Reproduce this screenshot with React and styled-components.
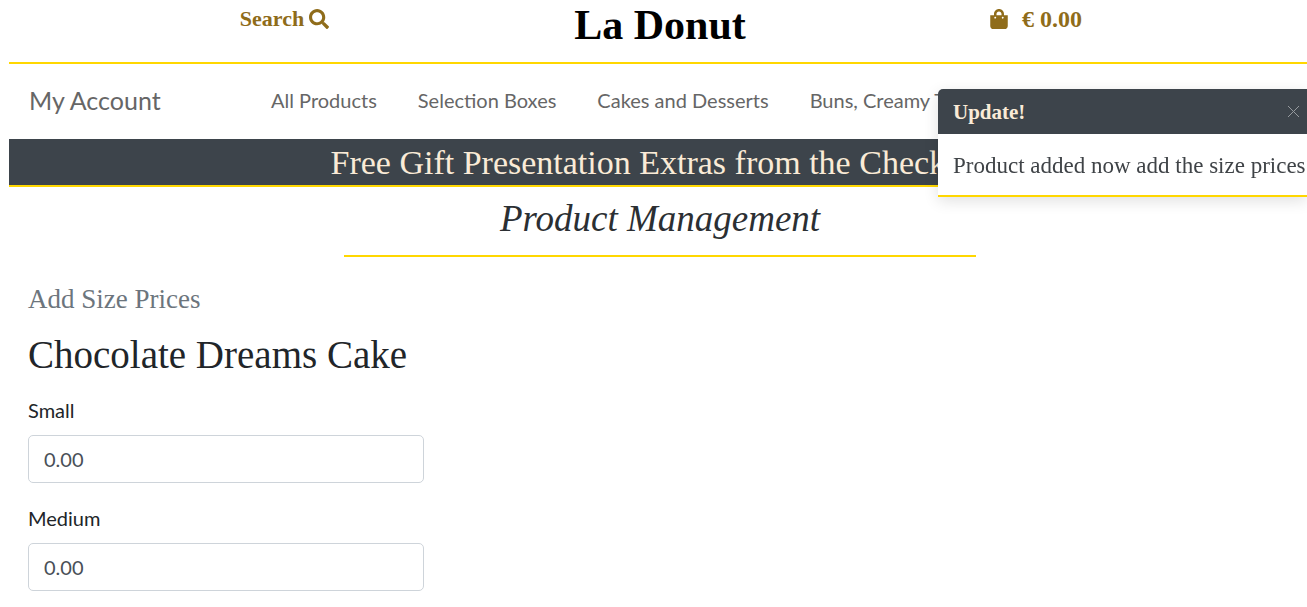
import React, { useState } from "react";
import styled, { createGlobalStyle } from "styled-components";
import { FaSearch, FaShoppingBag } from "react-icons/fa";

const serif = '"Liberation Serif", serif';
const gold = "#ffd700";
const slate = "#3d444b";
const cream = "#faebd7";

const GlobalStyle = createGlobalStyle`
  *, *::before, *::after { box-sizing: border-box; }
  body {
    margin: 0 -4px 0 9px;
    overflow-x: hidden;
    background: #fff;
    color: #212529;
    font-family: Lato, sans-serif;
    font-size: 20px;
    line-height: 30px;
  }
`;

const Header = styled.header`
  display: grid;
  grid-template-columns: 1fr 200px 1fr;
  justify-items: center;
  height: 64px;
  border-bottom: 2px solid ${gold};
`;

const HeaderLink = styled.a`
  display: inline-flex;
  align-items: center;
  align-self: start;
  gap: ${({ $gap }) => $gap}px;
  height: 38px;
  color: #8f6c1a;
  font: bold ${({ $size }) => $size}px/38px ${serif};
  text-decoration: none;
`;

const Brand = styled.a`
  color: #000;
  font: bold 42px/50px ${serif};
  text-decoration: none;
  white-space: nowrap;
`;

const Nav = styled.nav`
  display: flex;
  align-items: center;
  height: 75px;
  padding: 0 0 4px 20px;
  white-space: nowrap;
  overflow: hidden;
`;

const AccountLink = styled.a`
  flex: 0 0 242px;
  color: #666;
  font-size: 25px;
  text-decoration: none;
`;

const NavList = styled.ul`
  display: flex;
  gap: 41px;
  margin: 0;
  padding: 0;
  list-style: none;
`;

const NavLink = styled.a`
  color: #666;
  text-decoration: none;
`;

const Banner = styled.p`
  margin: 0;
  height: 48px;
  padding-top: 2px;
  border-bottom: 2px solid ${gold};
  background: ${slate};
  color: ${cream};
  font: 34px/44px ${serif};
  text-align: center;
  white-space: nowrap;
`;

const Main = styled.main`
  padding: 0 19px;
`;

const PageTitle = styled.h1`
  width: 50%;
  margin: 0 auto 26px;
  padding-bottom: 4px;
  border-bottom: 2px solid ${gold};
  color: #2b2f33;
  font: italic 37px/64px ${serif};
  text-align: center;
  white-space: nowrap;
`;

const Subtitle = styled.h2`
  margin: 0 0 16px;
  color: #6c757d;
  font: 27px/32px ${serif};
`;

const ProductName = styled.h3`
  margin: 0 0 16px;
  font: 39px/48px ${serif};
`;

const Form = styled.form`
  max-width: 396px;
`;

const Field = styled.div`
  display: flex;
  flex-direction: column;
  gap: 10px;
  margin-bottom: 20px;
`;

const Label = styled.label`
  color: #212529;
`;

const Input = styled.input`
  width: 100%;
  height: 48px;
  padding: 8px 15px;
  border: 1px solid #ced4da;
  border-radius: 5px;
  background: #fff;
  color: #495057;
  font: inherit;
`;

const Toast = styled.section`
  position: fixed;
  top: 89px;
  right: 0;
  width: 369px;
  overflow: hidden;
  border-bottom: 2px solid ${gold};
  border-top-left-radius: 5px;
  background: #fff;
  box-shadow: 0 4px 15px rgba(0, 0, 0, 0.12);
  font-family: ${serif};
`;

const ToastHeader = styled.div`
  display: flex;
  align-items: center;
  justify-content: space-between;
  height: 45px;
  padding: 0 7px 0 15px;
  background: ${slate};
  color: ${cream};
  font-size: 21px;
`;

const CloseButton = styled.button`
  display: flex;
  padding: 0;
  border: 0;
  background: none;
  color: #969a9e;
  cursor: pointer;
`;

const ToastBody = styled.p`
  margin: 0;
  padding: 2px 0 0 15px;
  color: #3f4347;
  font-size: 23px;
  line-height: 59px;
  white-space: nowrap;
`;

const links = ["All Products", "Selection Boxes", "Cakes and Desserts", "Buns, Creamy Treats"];
const sizes = ["Small", "Medium"];

export default function App() {
  const [open, setOpen] = useState(true);
  return (
    <>
      <GlobalStyle />
      <Header>
        <HeaderLink href="#search" $gap={5} $size={22}>
          Search <FaSearch size={20} aria-hidden="true" />
        </HeaderLink>
        <Brand href="#home">La Donut</Brand>
        <HeaderLink href="#bag" $gap={13} $size={24}>
          <FaShoppingBag size={20} aria-hidden="true" /> € 0.00
        </HeaderLink>
      </Header>
      <Nav aria-label="Main">
        <AccountLink href="#account">My Account</AccountLink>
        <NavList>
          {links.map((name) => (
            <li key={name}>
              <NavLink href="#products">{name}</NavLink>
            </li>
          ))}
        </NavList>
      </Nav>
      <Banner>Free Gift Presentation Extras from the Checkout</Banner>
      <Main>
        <PageTitle>Product Management</PageTitle>
        <Subtitle>Add Size Prices</Subtitle>
        <ProductName>Chocolate Dreams Cake</ProductName>
        <Form>
          {sizes.map((size) => (
            <Field key={size}>
              <Label htmlFor={size}>{size}</Label>
              <Input id={size} name={size} inputMode="decimal" defaultValue="0.00" />
            </Field>
          ))}
        </Form>
      </Main>
      {open && (
        <Toast role="status">
          <ToastHeader>
            <strong>Update!</strong>
            <CloseButton type="button" aria-label="Close" onClick={() => setOpen(false)}>
              <svg width="13" height="13" viewBox="0 0 13 13" stroke="currentColor" aria-hidden="true">
                <path d="M1 1l11 11M12 1L1 12" />
              </svg>
            </CloseButton>
          </ToastHeader>
          <ToastBody>Product added now add the size prices</ToastBody>
        </Toast>
      )}
    </>
  );
}
